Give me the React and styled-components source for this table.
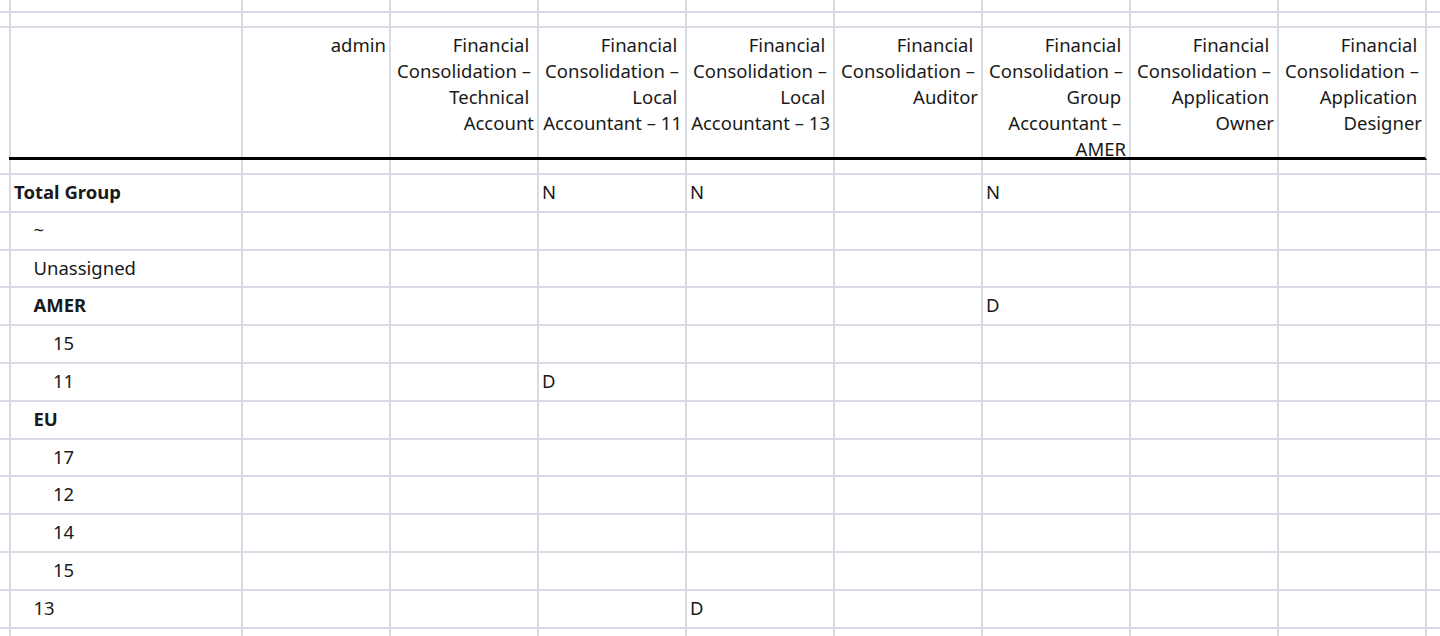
import React from "react";
import styled, { createGlobalStyle } from "styled-components";

const GRID = "#d7dbe6";

const Global = createGlobalStyle`
  html, body { margin: 0; padding: 0; background: #ffffff; }
  body { overflow: hidden; }
`;

const Sheet = styled.div`
  display: grid;
  grid-template-columns: 11px 232px repeat(8, 148px) 1fr;
  grid-template-rows: 13px 15px 132px 15px repeat(12, 37.8px) 1fr;
  width: 1440px;
  height: 636px;
  overflow: hidden;
  background: #ffffff;
  font-family: "Noto Sans", "Open Sans", sans-serif;
  font-size: 18.5px;
  color: #1a1a1a;
`;

const Cell = styled.div`
  box-sizing: border-box;
  min-width: 0;
  border-right: ${(p) => (p.$lastCol ? "none" : `2px solid ${GRID}`)};
  border-bottom: ${(p) => (p.$noBottom ? "none" : `2px solid ${GRID}`)};
  white-space: nowrap;
`;

const HeadCell = styled(Cell)`
  position: relative;
  z-index: 1;
  border-bottom: 3px solid #000000;
  margin-left: ${(p) => (p.$bleed ? "-2px" : "0")};

  &::after {
    content: "";
    display: ${(p) => (p.$fill ? "block" : "none")};
    position: absolute;
    right: -2px;
    bottom: -3px;
    width: 2px;
    height: 3px;
    background: #000000;
  }
`;

const HeaderCell = styled(HeadCell)`
  display: flex;
  flex-direction: column;
  align-items: flex-end;
  padding: 4px 3px 0 0;
  line-height: 26px;
  overflow: visible;
`;

const HeaderLine = styled.span`
  display: block;
  white-space: pre;
`;

const LabelCell = styled(Cell)`
  line-height: 33px;
  padding-left: ${(p) => 3 + p.$level * 19.5}px;
  font-weight: ${(p) => (p.$bold ? 700 : 400)};
`;

const ValueCell = styled(Cell)`
  line-height: 33px;
  padding-left: 3px;
`;

const HEADERS = [
  ["admin"],
  ["Financial ", "Consolidation –\u2009", "Technical ", "Account"],
  ["Financial ", "Consolidation –\u2009", "Local ", "Accountant – 11"],
  ["Financial ", "Consolidation –\u2009", "Local ", "Accountant – 13"],
  ["Financial ", "Consolidation –\u2009", "Auditor"],
  ["Financial ", "Consolidation –\u2009", "Group ", "Accountant – ", "AMER"],
  ["Financial ", "Consolidation –\u2009", "Application ", "Owner"],
  ["Financial ", "Consolidation –\u2009", "Application ", "Designer"],
];

const ROWS = [
  { label: "Total Group", level: 0, bold: true, values: { 2: "N", 3: "N", 5: "N" } },
  { label: "~", level: 1 },
  { label: "Unassigned", level: 1 },
  { label: "AMER", level: 1, bold: true, values: { 5: "D" } },
  { label: "15", level: 2 },
  { label: "11", level: 2, values: { 2: "D" } },
  { label: "EU", level: 1, bold: true },
  { label: "17", level: 2 },
  { label: "12", level: 2 },
  { label: "14", level: 2 },
  { label: "15", level: 2 },
  { label: "13", level: 1, values: { 3: "D" } },
];

const DATA_COLS = 8;

function blankRow(id, noBottom) {
  const cells = [];
  for (let c = 0; c < DATA_COLS + 3; c++) {
    cells.push(
      <Cell key={`${id}-${c}`} $lastCol={c === DATA_COLS + 2} $noBottom={noBottom} />
    );
  }
  return cells;
}

export default function App() {
  return (
    <>
      <Global />
      <Sheet>
        {blankRow("r0")}
        {blankRow("r1")}

        <Cell key="h-edge" $noBottom />
        <HeadCell key="h-label" $bleed $fill />
        {HEADERS.map((lines, i) => (
          <HeaderCell key={`h-${i}`} $fill={i < HEADERS.length - 1}>
            {lines.map((t, j) => (
              <HeaderLine key={j}>{t}</HeaderLine>
            ))}
          </HeaderCell>
        ))}
        <Cell key="h-end" $lastCol $noBottom />

        {blankRow("gap")}

        {ROWS.map((row, r) => (
          <React.Fragment key={`row-${r}`}>
            <Cell />
            <LabelCell $level={row.level} $bold={row.bold}>
              {row.label}
            </LabelCell>
            {Array.from({ length: DATA_COLS }).map((_, c) => (
              <ValueCell key={c}>{(row.values && row.values[c]) || ""}</ValueCell>
            ))}
            <Cell $lastCol />
          </React.Fragment>
        ))}

        {blankRow("tail", true)}
      </Sheet>
    </>
  );
}
